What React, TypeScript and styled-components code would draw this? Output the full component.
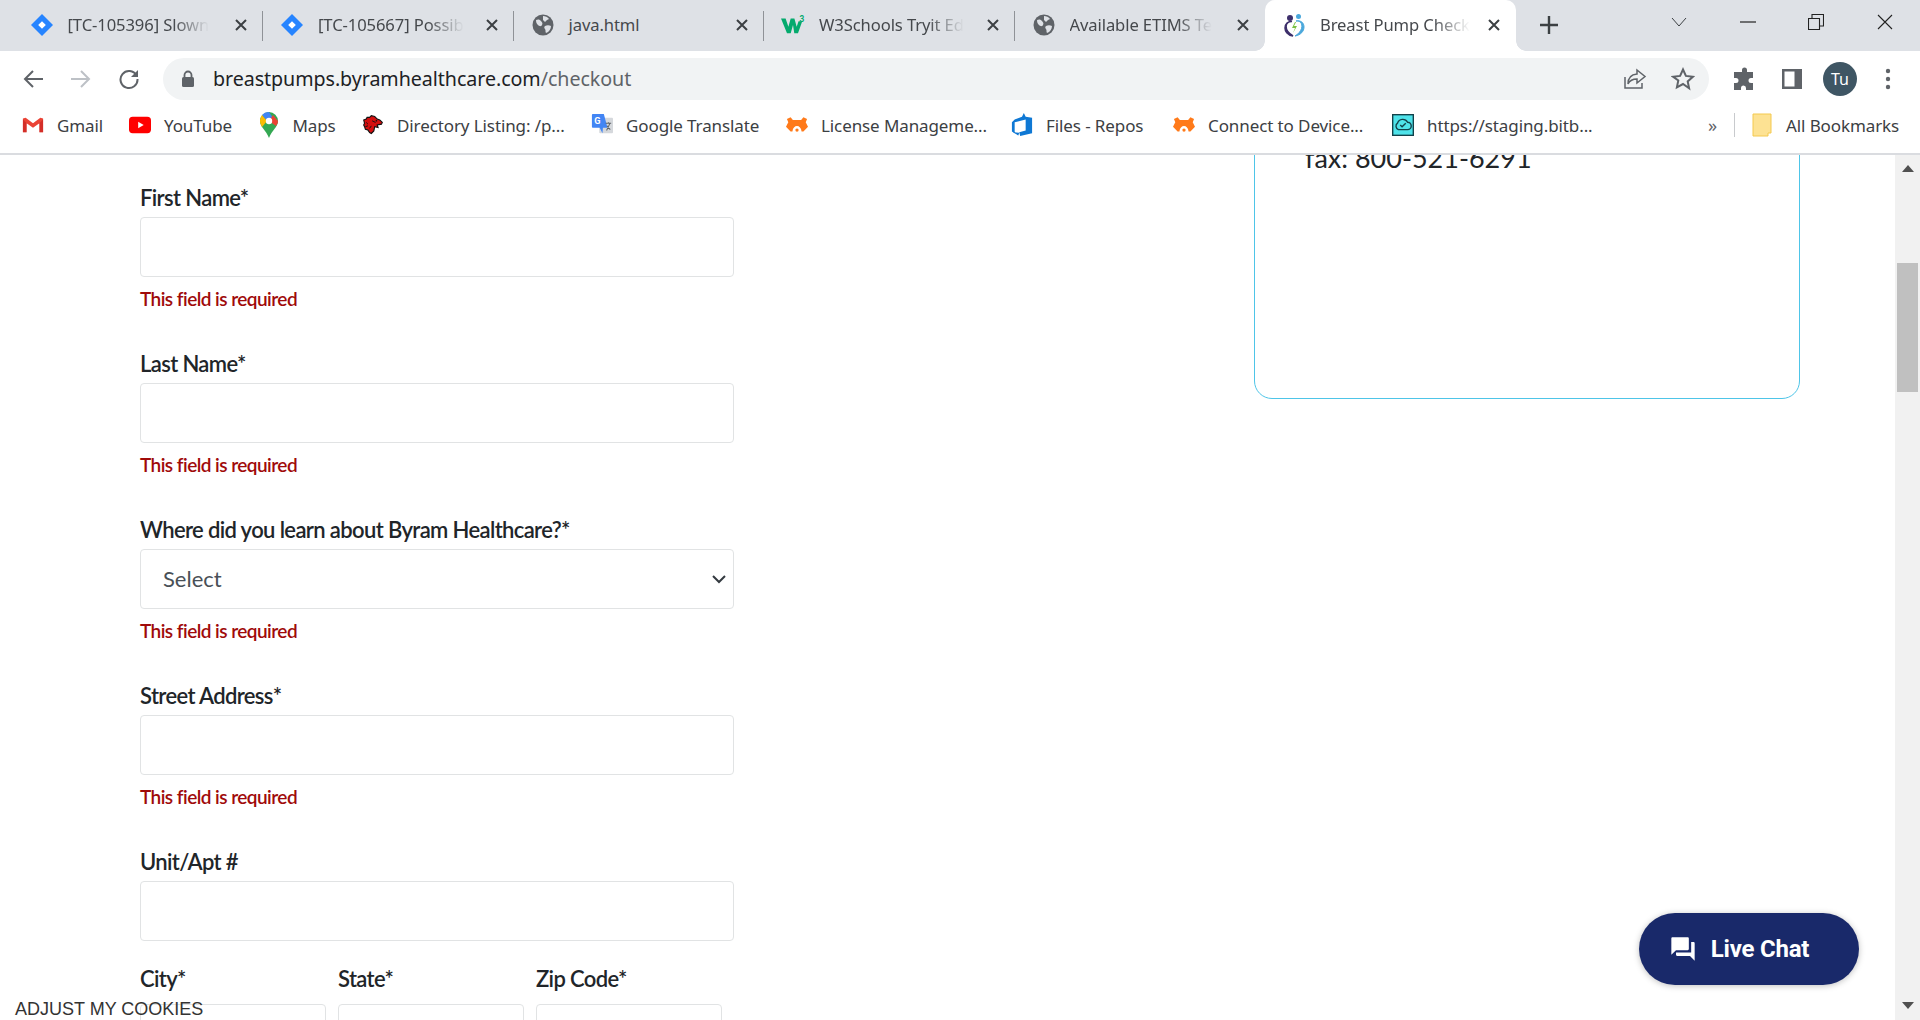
import React from "react";
import styled, { createGlobalStyle } from "styled-components";

const Global = createGlobalStyle`
  html, body { margin: 0; padding: 0; height: 100%; overflow: hidden; background: #fff; }
  #root { height: 100%; }
  * { box-sizing: border-box; }
`;

const chromeFont = `"Noto Sans", "Open Sans", "Liberation Sans", sans-serif`;
const pageFont = `Lato, "Liberation Sans", sans-serif`;

const Page = styled.div`
  height: 1020px;
  display: flex;
  flex-direction: column;
  overflow: hidden;
  font-family: ${chromeFont};
`;

/* ---------- tab strip ---------- */
const TabStrip = styled.div`
  height: 51px;
  flex: none;
  background: #dee1e6;
  display: flex;
  align-items: stretch;
  padding-left: 12.5px;
`;
const Tab = styled.div<{ $sep?: boolean }>`
  position: relative;
  width: 250.5px;
  flex: none;
  display: flex;
  align-items: center;
  padding: 0 15px 2px 17px;
  gap: 14px;
  &::after {
    content: "";
    display: ${(p) => (p.$sep ? "block" : "none")};
    position: absolute;
    right: 0;
    top: 11px;
    height: 30px;
    width: 1px;
    background: #8f9297;
  }
`;
const ActiveTab = styled(Tab)`
  background: #fff;
  border-radius: 10px 10px 0 0;
  &::before,
  &::after {
    content: "";
    display: block;
    position: absolute;
    top: auto;
    bottom: 0;
    width: 10px;
    height: 10px;
    background-color: transparent;
  }
  &::before {
    left: -10px;
    background-image: radial-gradient(circle at 0 0, transparent 9.5px, #fff 10px);
  }
  &::after {
    right: -10px;
    background-image: radial-gradient(circle at 100% 0, transparent 9.5px, #fff 10px);
  }
`;
const TabIcon = styled.span`
  width: 24px;
  height: 24px;
  flex: none;
  display: flex;
  align-items: center;
  justify-content: center;
`;
const TabTitle = styled.span<{ $fade?: boolean }>`
  flex: none;
  white-space: nowrap;
  font-size: 16.6px;
  letter-spacing: -0.1px;
  color: #45484c;
  ${(p) =>
    p.$fade
      ? `-webkit-mask-image: linear-gradient(to right, #000 75%, transparent 100%);
         mask-image: linear-gradient(to right, #000 75%, transparent 100%);`
      : ""}
`;
const TabClose = styled.span`
  margin-left: auto;
  display: flex;
`;
const NewTab = styled.div`
  width: 66px;
  flex: none;
  display: flex;
  align-items: center;
  justify-content: center;
  padding-bottom: 2px;
`;
const WindowControls = styled.div`
  margin-left: auto;
  display: flex;
  align-items: flex-start;
`;
const WinButton = styled.div<{ $w?: number }>`
  width: ${(p) => p.$w ?? 68}px;
  height: 44px;
  display: flex;
  align-items: center;
  justify-content: center;
`;

/* ---------- toolbar ---------- */
const Toolbar = styled.div`
  height: 54px;
  flex: none;
  background: #fff;
  display: flex;
  align-items: center;
  padding: 1px 0 0 16px;
`;
const NavButton = styled.div`
  width: 48px;
  height: 36px;
  flex: none;
  display: flex;
  align-items: center;
  justify-content: center;
`;
const NavGroup = styled.div`
  display: flex;
  width: 154px;
  flex: none;
  margin-left: -7px;
`;
const UrlBar = styled.div`
  width: 1546px;
  height: 42px;
  flex: none;
  border-radius: 21px;
  background: #f1f3f4;
  display: flex;
  align-items: center;
  padding: 0 2px 0 18px;
`;
const Url = styled.div`
  margin-left: 18px;
  font-size: 19.65px;
  letter-spacing: -0.05px;
  color: #202124;
  flex: 1;
  white-space: nowrap;
`;
const UrlPath = styled.span`
  color: #5f6368;
`;
const UrlAction = styled.div`
  width: 48px;
  display: flex;
  align-items: center;
  justify-content: center;
`;
const ToolActions = styled.div`
  display: flex;
  align-items: center;
  margin-left: 11px;
`;
const ToolAction = styled.div`
  width: 48px;
  height: 40px;
  display: flex;
  align-items: center;
  justify-content: center;
`;
const Avatar = styled.div`
  width: 34px;
  height: 34px;
  border-radius: 50%;
  background: #3f5664;
  color: #fff;
  font-size: 16px;
  display: flex;
  align-items: center;
  justify-content: center;
`;

/* ---------- bookmarks ---------- */
const BookmarkBar = styled.div`
  height: 50px;
  flex: none;
  background: #fff;
  border-bottom: 2px solid #dadce0;
  display: flex;
  align-items: center;
  padding: 0 0 8px 22px;
  font-size: 17px;
  color: #3c4043;
`;
const Bookmark = styled.div<{ $w: number }>`
  width: ${(p) => p.$w}px;
  flex: none;
  display: flex;
  align-items: center;
  gap: 13px;
  white-space: nowrap;
  letter-spacing: -0.1px;
`;
const BmIcon = styled.span`
  width: 22px;
  height: 24px;
  flex: none;
  display: flex;
  align-items: center;
  justify-content: center;
`;
const Chevrons = styled.div`
  width: 26px;
  flex: none;
  margin-left: 3px;
  font-size: 18px;
  color: #5f6368;
`;
const BmSep = styled.div`
  width: 1px;
  height: 24px;
  background: #c8cacd;
  margin: 0 16px 0 0;
  flex: none;
`;

/* ---------- page ---------- */
const Viewport = styled.div`
  flex: 1;
  min-height: 0;
  display: flex;
`;
const Content = styled.div`
  position: relative;
  flex: 1;
  min-width: 0;
  overflow: hidden;
  background: #fff;
  display: flex;
  font-family: ${pageFont};
`;
const FormColumn = styled.div`
  width: 594px;
  flex: none;
  margin-left: 140px;
  padding-top: 30px;
`;
const Field = styled.div<{ $mb?: number }>`
  margin-bottom: ${(p) => p.$mb ?? 41}px;
`;
const Label = styled.label`
  display: block;
  height: 24px;
  line-height: 26px;
  margin-bottom: 8px;
  font-size: 22px;
  font-weight: 600;
  letter-spacing: -0.63px;
  color: #212529;
  white-space: nowrap;
`;
const Input = styled.input`
  display: block;
  width: 100%;
  height: 60px;
  background: #fff;
  border: 1px solid #e1e3e4;
  border-radius: 4px;
  outline: none;
`;
const SelectWrap = styled.div`
  position: relative;
`;
const Select = styled.select`
  display: block;
  width: 100%;
  height: 60px;
  padding: 0 22px 2px;
  appearance: none;
  background: #fff;
  border: 1px solid #e1e3e4;
  border-radius: 4px;
  font-family: ${pageFont};
  font-size: 22px;
  color: #495057;
  outline: none;
`;
const SelectChevron = styled.svg`
  position: absolute;
  right: 7px;
  top: 25px;
`;
const ErrorText = styled.div`
  height: 22px;
  line-height: 22px;
  margin-top: 11px;
  font-size: 19px;
  font-weight: 600;
  letter-spacing: -0.55px;
  color: #a00a0a;
`;
const TripleRow = styled.div`
  display: grid;
  grid-template-columns: 186px 186px 186px;
  column-gap: 12px;
`;
const RowLabel = styled(Label)`
  margin-bottom: 14px;
`;
const SideColumn = styled.div`
  width: 546px;
  flex: none;
  margin-left: 520px;
`;
const ContactCard = styled.div`
  height: 294px;
  margin-top: -50px;
  border: 1px solid #4ec5e8;
  border-radius: 18px;
  padding: 36px 0 0 50px;
`;
const Fax = styled.div`
  font-size: 27px;
  line-height: 32px;
  color: #212529;
  white-space: nowrap;
`;
const CookieLink = styled.div`
  position: absolute;
  left: 15px;
  bottom: 0;
  font-family: "Liberation Sans", Arial, sans-serif;
  font-size: 18px;
  line-height: 22px;
  color: #333;
  white-space: nowrap;
`;
const LiveChat = styled.button`
  position: absolute;
  left: 1639px;
  top: 758px;
  width: 220px;
  height: 72px;
  border: none;
  border-radius: 36px;
  background: #19296a;
  box-shadow: 0 1px 6px rgba(0, 0, 0, 0.25);
  color: #fff;
  font-family: Roboto, sans-serif;
  font-weight: 700;
  font-size: 24px;
  letter-spacing: -0.2px;
  display: flex;
  align-items: center;
  justify-content: center;
  gap: 14px;
  padding: 0 20px 0 0;
`;

/* ---------- scrollbar ---------- */
const Scrollbar = styled.div`
  width: 25px;
  flex: none;
  background: #f1f1f1;
  display: flex;
  flex-direction: column;
  align-items: center;
  justify-content: space-between;
  position: relative;
  padding: 10px 0 11px;
`;
const Thumb = styled.div`
  position: absolute;
  left: 2px;
  top: 108px;
  width: 21px;
  height: 129px;
  background: #c0c0c0;
`;

/* ---------- icons ---------- */
const Jira = () => (
  <svg width="24" height="24" viewBox="0 0 24 24">
    <path d="M12 1 L23 12 L12 23 L1 12Z" fill="#2684ff" />
    <path d="M12 8.2 L15.8 12 L12 15.8 L8.2 12Z" fill="#fff" />
  </svg>
);
const Globe = () => (
  <svg width="22" height="22" viewBox="0 0 22 22">
    <circle cx="11" cy="11" r="10.5" fill="#5f6368" />
    <path
      d="M4 6c2-1 4-.5 5 1s2 2 1 4-3 1-4 0-2-2-2-5zM11 2c2 0 5 1 6 3l-2 1-2 2-2-2zM13 12c2-1 4-1 6 0 0 3-2 6-5 7-1-1 0-3-1-4s-1-2 0-3z"
      fill="#dee1e6"
    />
  </svg>
);
const W3 = () => (
  <svg width="26" height="22" viewBox="0 0 26 22">
    <path d="M0 4h5l3 9 2.5-9h4l2.5 9 2-6h4l-4.600 13h-4L13 11l-2.500 9h-4z" fill="#04aa6d" />
    <text x="20" y="8" fontSize="9" fontWeight="700" fill="#04aa6d" fontFamily="Roboto, sans-serif">3</text>
  </svg>
);
const Byram = () => (
  <svg width="24" height="26" viewBox="0 0 24 26">
    <circle cx="8" cy="6" r="3" fill="#3d2f6b" />
    <circle cx="16.500" cy="4.500" r="2.500" fill="#4aa8dc" />
    <path d="M10 9.500C3 9 1 18 11 24 5 23 3 19 3 16c0-4 3-7 7-6.500z" fill="#3d2f6b" stroke="#3d2f6b" strokeWidth="1.500" />
    <path d="M14 9c7-1 9 9-1 15 6-1 9-5 9-9 0-4-3-7-8-6z" fill="#4aa8dc" stroke="#4aa8dc" strokeWidth="1" />
    <path d="M13 10l-3 6h3l-2 5 4-7h-3l2-4z" fill="#7ac143" />
  </svg>
);
const Close = () => (
  <svg width="14" height="14" viewBox="0 0 14 14">
    <path d="M2 2l10 10M12 2L2 12" stroke="#3c4043" strokeWidth="2" />
  </svg>
);

const tabs = [
  { t: "[TC-105396] Slown", i: <Jira />, sep: true, fade: true },
  { t: "[TC-105667] Possib", i: <Jira />, sep: true, fade: true },
  { t: "java.html", i: <Globe />, sep: true, fade: false },
  { t: "W3Schools Tryit Ed", i: <W3 />, sep: true, fade: true },
  { t: "Available ETIMS Te", i: <Globe />, sep: false, fade: true },
];

const OrangeFox = () => (
  <svg width="24" height="18" viewBox="0 0 24 18">
    <path d="M1 2.500 5 .5l2.500 3h9L19 .5l4 2-1.500 3.500L24 11l-5 5h-2c-.5-4-2.500-6-5-6s-4.500 2-5 6H5l-5-5 2.500-5z" fill="#ff7a1a" />
    <circle cx="12" cy="14.500" r="1.800" fill="#ff7a1a" />
  </svg>
);

const bookmarks: { t: string; w: number; i: React.ReactNode }[] = [
  {
    t: "Gmail",
    w: 107,
    i: (
      <svg width="24" height="18" viewBox="0 0 24 18">
        <path d="M1 2v15h4V7l7 5 7-5v10h4V2l-3-1-8 6-8-6z" fill="#ea4335" />
        <path d="M1 17h4V7L1 3z" fill="#c5221f" opacity=".6" />
        <path d="M19 17h4V3l-4 4z" fill="#c5221f" opacity=".6" />
      </svg>
    ),
  },
  {
    t: "YouTube",
    w: 128.5,
    i: (
      <svg width="24" height="18" viewBox="0 0 24 18">
        <rect width="24" height="18" rx="4" fill="#f00" />
        <path d="M10 5.500l6 3.500-6 3.500z" fill="#fff" />
      </svg>
    ),
  },
  {
    t: "Maps",
    w: 104.5,
    i: (
      <svg width="18" height="26" viewBox="0 0 18 26">
        <path d="M9 0a9 9 0 0 1 9 9c0 6-6 9-9 17-3-8-9-11-9-17a9 9 0 0 1 9-9z" fill="#34a853" />
        <path d="M2 3a9 9 0 0 1 7-3l4 6-6 3z" fill="#4285f4" />
        <path d="M18 9c0 2-1 3.500-2 5L9 9l4-6z" fill="#ea4335" />
        <path d="M0 9a9 9 0 0 1 2-6l5 6-5 6c-1-2-2-4-2-6z" fill="#fbbc04" />
        <circle cx="9" cy="9" r="3.200" fill="#fff" />
      </svg>
    ),
  },
  {
    t: "Directory Listing: /p...",
    w: 229,
    i: (
      <svg width="26" height="24" viewBox="0 0 26 24">
        <path d="M2 6l3-1 1-2 3 0 2-2 4 1 3 3 3 1 3 3-1 2-5 1 1 3-4-1-1 5-3 3-2-1-2-3-3-1-1-3-1-2 1-2z" fill="#d40f0f" stroke="#111" strokeWidth="1.300" />
        <path d="M5 9l2 2M4 14l3-1M9 16l2-3M12 7l4 2" stroke="#111" strokeWidth="1.100" fill="none" />
        <circle cx="17" cy="7" r="1" fill="#111" />
      </svg>
    ),
  },
  {
    t: "Google Translate",
    w: 195,
    i: (
      <svg width="24" height="26" viewBox="0 0 24 26">
        <rect x="9" y="5" width="15" height="17" rx="1" fill="#d5d8dc" />
        <path d="M2 1h12l4 15H13l-.5 6-3-6H2a1 1 0 0 1-1-1V2a1 1 0 0 1 1-1z" fill="#4285f4" />
        <text x="3.500" y="12" fontSize="10" fontWeight="700" fill="#fff" fontFamily="Roboto, sans-serif">G</text>
        <path d="M16 11h6M19 10v1.500M17 19l3.500-7.500M17.500 14l3.500 4" stroke="#5f6368" strokeWidth="1.100" fill="none" />
      </svg>
    ),
  },
  { t: "License Manageme...", w: 225, i: <OrangeFox /> },
  {
    t: "Files - Repos",
    w: 162,
    i: (
      <svg width="24" height="26" viewBox="0 0 24 26">
        <path d="M14 0l-2 4-8 3-3 3v10l3 2V10l12-3v12L9 21l1 4 13-3V5l-7-1z" fill="#0f78d4" />
        <path d="M1 18l3 3 5 .5-1 3-5-3z" fill="#0f78d4" />
      </svg>
    ),
  },
  { t: "Connect to Device...", w: 219, i: <OrangeFox /> },
  {
    t: "https://staging.bitb...",
    w: 313,
    i: (
      <svg width="24" height="24" viewBox="0 0 24 24">
        <rect x=".750" y=".750" width="22.500" height="22.500" fill="#4fe3ea" stroke="#12424a" strokeWidth="1.500" />
        <path d="M7 17a4 4 0 0 1-1-7 6 6 0 0 1 11-1 4 4 0 0 1 0 8z" fill="none" stroke="#12424a" strokeWidth="1.500" />
        <path d="M9 12l2 2 4-4" fill="none" stroke="#12424a" strokeWidth="1.500" />
      </svg>
    ),
  },
];

const Field1 = ({ label, mb, error = true }: { label: string; mb?: number; error?: boolean }) => (
  <Field $mb={mb}>
    <Label>{label}</Label>
    <Input />
    {error && <ErrorText>This field is required</ErrorText>}
  </Field>
);

export default function App() {
  return (
    <Page>
      <Global />
      <TabStrip>
        {tabs.map((t) => (
          <Tab key={t.t} $sep={t.sep}>
            <TabIcon>{t.i}</TabIcon>
            <TabTitle $fade={t.fade}>{t.t}</TabTitle>
            <TabClose><Close /></TabClose>
          </Tab>
        ))}
        <ActiveTab>
          <TabIcon><Byram /></TabIcon>
          <TabTitle $fade>Breast Pump Check</TabTitle>
          <TabClose><Close /></TabClose>
        </ActiveTab>
        <NewTab>
          <svg width="20" height="20" viewBox="0 0 20 20">
            <path d="M10 1v18M1 10h18" stroke="#3c4043" strokeWidth="2.400" />
          </svg>
        </NewTab>
        <WindowControls>
          <WinButton $w={70}>
            <svg width="18" height="12" viewBox="0 0 18 12">
              <path d="M2 2l7 8 7-8" stroke="#3c4043" strokeWidth="1" fill="none" />
            </svg>
          </WinButton>
          <WinButton>
            <svg width="16" height="2" viewBox="0 0 16 2"><path d="M0 1h16" stroke="#222" strokeWidth="1.200" /></svg>
          </WinButton>
          <WinButton>
            <svg width="16" height="16" viewBox="0 0 16 16">
              <path d="M.5 4.500h11v11H.5zM4 4V.5h11.500V12H12" stroke="#222" strokeWidth="1.100" fill="none" />
            </svg>
          </WinButton>
          <WinButton $w={70}>
            <svg width="16" height="16" viewBox="0 0 16 16"><path d="M1 1l14 14M15 1L1 15" stroke="#222" strokeWidth="1.100" /></svg>
          </WinButton>
        </WindowControls>
      </TabStrip>

      <Toolbar>
        <NavGroup>
          <NavButton>
            <svg width="22" height="22" viewBox="0 0 22 22">
              <path d="M21 11H3M11 3l-8 8 8 8" stroke="#5f6368" strokeWidth="2" fill="none" />
            </svg>
          </NavButton>
          <NavButton>
            <svg width="22" height="22" viewBox="0 0 22 22">
              <path d="M1 11h18M11 3l8 8-8 8" stroke="#bdc1c6" strokeWidth="2" fill="none" />
            </svg>
          </NavButton>
          <NavButton>
            <svg width="22" height="22" viewBox="0 0 22 22">
              <path d="M18.500 7.500A8.500 8.500 0 1 0 19.500 11" stroke="#5f6368" strokeWidth="2" fill="none" />
              <path d="M20 2v7h-7z" fill="#5f6368" />
            </svg>
          </NavButton>
        </NavGroup>
        <UrlBar>
          <svg width="14" height="18" viewBox="0 0 14 18">
            <path d="M3.500 7V5a3.500 3.500 0 0 1 7 0v2" stroke="#5f6368" strokeWidth="1.800" fill="none" />
            <rect x="1" y="7" width="12" height="10" rx="1.500" fill="#5f6368" />
          </svg>
          <Url>breastpumps.byramhealthcare.com<UrlPath>/checkout</UrlPath></Url>
          <UrlAction>
            <svg width="24" height="22" viewBox="0 0 24 22">
              <path d="M2 9v11h17v-5" stroke="#5f6368" strokeWidth="1.500" fill="none" />
              <path d="M14 2l8 6.500-8 6.500v-4c-4 0-7 1-9 5 0-6 3-9.500 9-10z" stroke="#5f6368" strokeWidth="1.500" fill="none" />
            </svg>
          </UrlAction>
          <UrlAction>
            <svg width="24" height="24" viewBox="0 0 24 24">
              <path d="M12 2.500l2.900 6.400 7 .8-5.200 4.700 1.400 6.900L12 17l-6.100 3.300 1.400-6.900L2.100 9.700l7-.8z" stroke="#5f6368" strokeWidth="2" fill="none" />
            </svg>
          </UrlAction>
        </UrlBar>
        <ToolActions>
          <ToolAction>
            <svg width="24" height="24" viewBox="0 0 24 24">
              <path d="M10 2a2.500 2.500 0 0 1 5 0v2h6v6h-2a2.500 2.500 0 0 0 0 5h2v7h-7v-2a2.500 2.500 0 0 0-5 0v2H2v-7h2a2.500 2.500 0 0 0 0-5H2V4h8z" fill="#5f6368" transform="translate(0 1)" />
            </svg>
          </ToolAction>
          <ToolAction>
            <svg width="22" height="22" viewBox="0 0 22 22">
              <path d="M1 1h20v20H1z" fill="#5f6368" />
              <rect x="3.500" y="3.500" width="10" height="15" fill="#fff" />
            </svg>
          </ToolAction>
          <ToolAction><Avatar>Tu</Avatar></ToolAction>
          <ToolAction>
            <svg width="6" height="22" viewBox="0 0 6 22">
              <circle cx="3" cy="3" r="2.200" fill="#5f6368" />
              <circle cx="3" cy="11" r="2.200" fill="#5f6368" />
              <circle cx="3" cy="19" r="2.200" fill="#5f6368" />
            </svg>
          </ToolAction>
        </ToolActions>
      </Toolbar>

      <BookmarkBar>
        {bookmarks.map((b) => (
          <Bookmark key={b.t} $w={b.w}>
            <BmIcon>{b.i}</BmIcon>
            {b.t}
          </Bookmark>
        ))}
        <Chevrons>»</Chevrons>
        <BmSep />
        <Bookmark $w={150}>
          <BmIcon>
            <svg width="20" height="24" viewBox="0 0 20 24">
              <path d="M1 1h18v19h-3v3H1z" fill="#fde293" stroke="#f4c94e" strokeWidth="1" />
            </svg>
          </BmIcon>
          All Bookmarks
        </Bookmark>
      </BookmarkBar>

      <Viewport>
        <Content>
          <FormColumn>
            <Field1 label="First Name*" />
            <Field1 label="Last Name*" />
            <Field>
              <Label>Where did you learn about Byram Healthcare?*</Label>
              <SelectWrap>
                <Select defaultValue="">
                  <option value="">Select</option>
                </Select>
                <SelectChevron width="16" height="10" viewBox="0 0 16 10">
                  <path d="M2 2l6 6 6-6" stroke="#343a40" strokeWidth="2" fill="none" />
                </SelectChevron>
              </SelectWrap>
              <ErrorText>This field is required</ErrorText>
            </Field>
            <Field1 label="Street Address*" />
            <Field1 label="Unit/Apt #" mb={25} error={false} />
            <TripleRow>
              {["City*", "State*", "Zip Code*"].map((l) => (
                <div key={l}>
                  <RowLabel>{l}</RowLabel>
                  <Input />
                </div>
              ))}
            </TripleRow>
          </FormColumn>
          <SideColumn>
            <ContactCard>
              <Fax>fax: 800-521-6291</Fax>
            </ContactCard>
          </SideColumn>
          <CookieLink>ADJUST MY COOKIES</CookieLink>
          <LiveChat>
            <svg width="28" height="28" viewBox="0 0 24 24">
              <path d="M21 6h-2v9H6v2c0 .55.45 1 1 1h11l4 4V7c0-.55-.45-1-1-1zm-4 6V3c0-.55-.45-1-1-1H3c-.55 0-1 .45-1 1v14l4-4h10c.55 0 1-.45 1-1z" fill="#fff" />
            </svg>
            Live Chat
          </LiveChat>
        </Content>
        <Scrollbar>
          <svg width="12" height="7" viewBox="0 0 12 7"><path d="M6 0l6 7H0z" fill="#505050" /></svg>
          <Thumb />
          <svg width="12" height="7" viewBox="0 0 12 7"><path d="M6 7L0 0h12z" fill="#505050" /></svg>
        </Scrollbar>
      </Viewport>
    </Page>
  );
}
